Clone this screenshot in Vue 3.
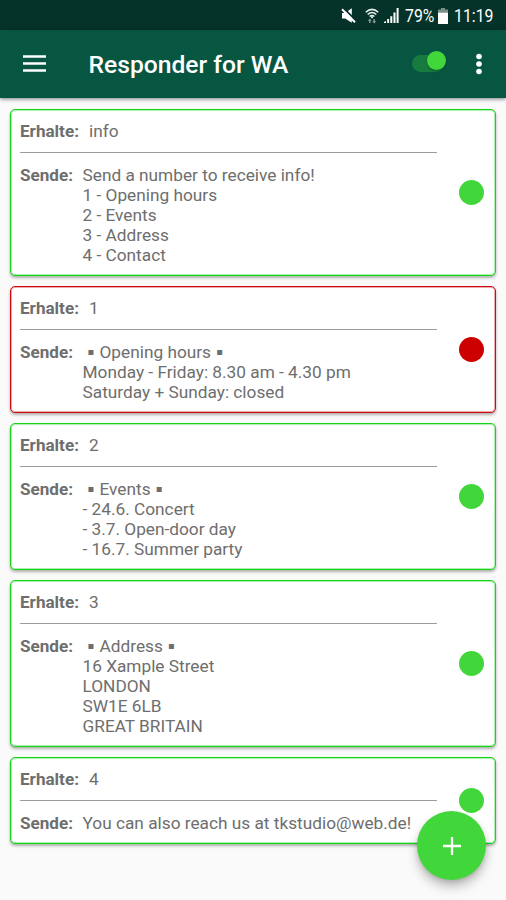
<script setup>
import { ref } from 'vue'

const rules = ref([
  { receive: 'info', active: true, title: '', lines: ['Send a number to receive info!', '1 - Opening hours', '2 - Events', '3 - Address', '4 - Contact'] },
  { receive: '1', active: false, title: 'Opening hours', lines: ['Monday - Friday: 8.30 am - 4.30 pm', 'Saturday + Sunday: closed'] },
  { receive: '2', active: true, title: 'Events', lines: ['- 24.6. Concert', '- 3.7. Open-door day', '- 16.7. Summer party'] },
  { receive: '3', active: true, title: 'Address', lines: ['16 Xample Street', 'LONDON', 'SW1E 6LB', 'GREAT BRITAIN'] },
  { receive: '4', active: true, title: '', lines: ['You can also reach us at tkstudio@web.de!'] },
])
</script>

<template>
  <div class="screen">
    <div class="status">
      <svg class="mute" viewBox="0 0 16 16" width="16" height="16">
        <path d="M1 5h3.200L10.800.3v14.500L4.200 10.500H1z" fill="#fff" />
        <path d="M2.500 0L15.500 13" stroke="#053329" stroke-width="1.800" />
        <path d="M1 1.200L14 14.200" stroke="#fff" stroke-width="2" />
      </svg>
      <svg class="wifi" viewBox="0 0 14 16" width="14" height="16">
        <g fill="none" stroke="#e9eeec" stroke-width="1.500">
          <path d="M.7 4.200Q7-1.500 13.300 4.200M2.700 6.500Q7 2.500 11.300 6.500M4.600 8.500Q7 6.400 9.400 8.500" />
        </g>
        <circle cx="7" cy="9.200" r="1" fill="#fff" />
        <path d="M4.800 10.500l2 2.300H5.500V15H4.100v-2.200H2.800zM9.200 15.500l-2-2.300h1.300v-2.200h1.400v2.200h1.300z" fill="#8b9c96" />
      </svg>
      <svg class="signal" viewBox="0 0 15 15" width="15" height="15">
        <path d="M0 15v-1l2-1V15zM3.200 15v-4h1.900v4zM6.300 15V8.200h2V15zM9.500 15V4.500h2V15zM12.600 15V0h2v15z" fill="#fff" />
      </svg>
      <span class="percent">79%</span>
      <svg class="battery" viewBox="0 0 10 16" width="10" height="16">
        <path d="M3 0h4v1.500h3V4.500H0V1.500h3z" fill="#7b8f88" />
        <path d="M0 4.500h10V16H0z" fill="#fff" />
      </svg>
      <span class="clock">11:19</span>
    </div>

    <header class="bar">
      <svg class="menu" viewBox="0 0 23 17" width="23" height="17">
        <path d="M0 1.500h23M0 8.500h23M0 15.500h23" stroke="#fff" stroke-width="2.300" />
      </svg>
      <h1 class="heading">Responder for WA</h1>
      <div class="switch"><span class="thumb"></span></div>
      <svg class="more" viewBox="0 0 6 22" width="6" height="22">
        <g fill="#fff">
          <circle cx="3" cy="3.500" r="2.800" />
          <circle cx="3" cy="11" r="2.800" />
          <circle cx="3" cy="18.500" r="2.800" />
        </g>
      </svg>
    </header>

    <main class="list">
      <article v-for="rule in rules" :key="rule.receive" class="card" :class="{ off: !rule.active }">
        <div class="content">
          <div class="row">
            <b class="label receive">Erhalte:</b>
            <span>{{ rule.receive }}</span>
          </div>
          <div class="divider"></div>
          <div class="row">
            <b class="label send">Sende:</b>
            <div class="message">
              <div v-if="rule.title" class="title">
                <span class="bullet">▪</span><span>{{ rule.title }}</span><span class="bullet">▪</span>
              </div>
              <div v-for="line in rule.lines" :key="line">{{ line }}</div>
            </div>
          </div>
        </div>
        <span class="dot"></span>
      </article>
    </main>

    <button class="fab" aria-label="Add">
      <svg viewBox="0 0 18 18" width="18" height="18">
        <path d="M9 0v18M0 9h18" stroke="#fff" stroke-width="2.300" />
      </svg>
    </button>
  </div>
</template>

<style>
body {
  background: #fafafa;
}
</style>

<style scoped>
.screen {
  position: relative;
  width: 506px;
  height: 900px;
  overflow: hidden;
  background: #fafafa;
  font-family: Roboto, sans-serif;
  color: #6e6e6e;
}
.status {
  box-sizing: border-box;
  height: 29.500px;
  padding: 2px 11px 0 0;
  display: flex;
  align-items: center;
  justify-content: flex-end;
  background: #053329;
  color: #fff;
  font-size: 18px;
  line-height: 28px;
}
.wifi {
  margin-left: 8px;
}
.signal {
  margin-left: 5px;
}
.percent,
.clock {
  white-space: nowrap;
  transform: scaleX(0.88);
  transform-origin: left center;
}
.percent {
  width: 30px;
  margin-left: 6px;
}
.battery {
  margin-left: 3px;
}
.clock {
  width: 41px;
  margin-left: 6px;
}
.bar {
  position: relative;
  box-sizing: border-box;
  height: 68.500px;
  padding: 0 24px 0 23px;
  display: flex;
  align-items: center;
  background: #075641;
  box-shadow: 0 1px 4px rgba(0, 0, 0, 0.5);
}
.menu {
  margin-right: 42.500px;
}
.heading {
  flex: 1;
  margin: 3px 0 0;
  color: #fff;
  font-size: 24.650px;
  font-weight: 500;
  line-height: 30px;
  white-space: nowrap;
}
.switch {
  position: relative;
  width: 32px;
  height: 17px;
  margin-right: 32px;
  border-radius: 9px;
  background: #177b40;
}
.thumb {
  position: absolute;
  top: -4px;
  right: -1.500px;
  width: 19px;
  height: 19px;
  border-radius: 50%;
  background: #41d73a;
  box-shadow: 0 1px 2px rgba(0, 0, 0, 0.3);
}
.list {
  display: flex;
  flex-direction: column;
  gap: 10.060px;
  padding: 10.750px 10px 0;
}
.card {
  box-sizing: border-box;
  display: flex;
  align-items: center;
  justify-content: space-between;
  padding: 10.870px 11px 10.080px 9px;
  border: 1px solid #16d416;
  border-radius: 5px;
  background: #fff;
  box-shadow: inset 0 0 0 1px rgba(22, 212, 22, 0.35), 0 2px 3px rgba(0, 0, 0, 0.3);
}
.card.off {
  border-color: #cc0a10;
  box-shadow: inset 0 0 0 1px rgba(204, 10, 16, 0.35), 0 2px 3px rgba(0, 0, 0, 0.3);
}
.content {
  width: 417px;
  font-size: 17.250px;
  line-height: 20px;
}
.row {
  display: flex;
  white-space: nowrap;
}
.label {
  font-size: 17.100px;
  font-weight: 700;
}
.receive {
  width: 69px;
}
.send {
  width: 62.500px;
}
.divider {
  height: 1px;
  margin: 11.100px 0 11.950px;
  background: #9c9c9c;
}
.title {
  display: flex;
  gap: 4px;
  padding-left: 4px;
}
.bullet {
  width: 9px;
  font-family: "DejaVu Sans", sans-serif;
  font-size: 10px;
  text-align: center;
}
.dot {
  width: 25px;
  height: 25px;
  margin-bottom: 0.500px;
  border-radius: 50%;
  background: #41d73a;
}
.off .dot {
  background: #cc0000;
}
.fab {
  position: absolute;
  left: 417px;
  top: 811px;
  width: 69px;
  height: 69px;
  padding: 0;
  display: flex;
  align-items: center;
  justify-content: center;
  border: 0;
  border-radius: 50%;
  background: #41d73a;
  box-shadow: 0 7px 11px rgba(0, 0, 0, 0.24), 0 2px 4px rgba(0, 0, 0, 0.12);
}
</style>
